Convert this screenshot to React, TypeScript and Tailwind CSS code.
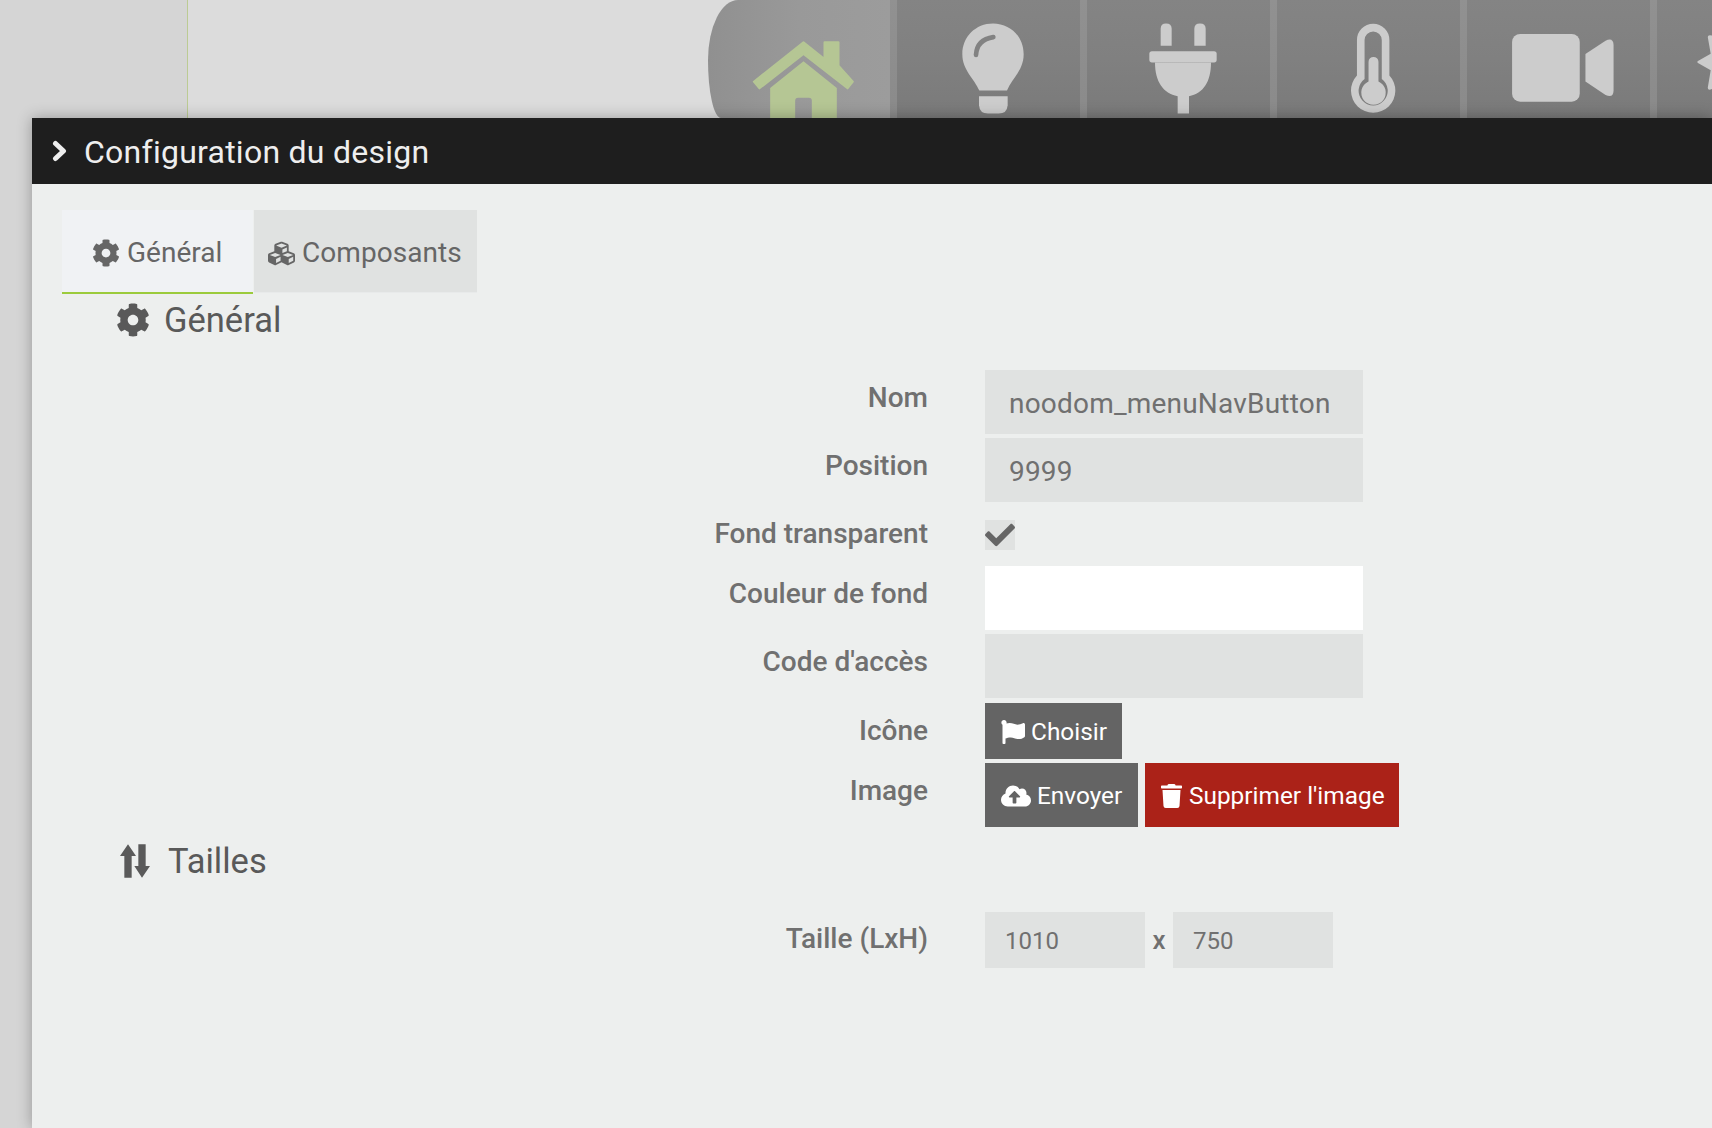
import { FaCheck, FaCloudUploadAlt, FaCog, FaCubes, FaFlag, FaTrash } from 'react-icons/fa';

function HomeIcon() {
  return (
    <svg width="107" height="82" viewBox="180 110 320 246" fill="#b5c694">
      <path
        d="M340 120 L403 170 L403 120 L445 120 L445 190 L488 238 L472 258 L340 155 L208 258 L191 238 Z"
        stroke="#b5c694"
        strokeWidth="6"
        strokeLinejoin="round"
      />
      <path d="M340 177 L440 257 L440 352 L365 352 L365 295 Q365 286 356 286 L324 286 Q315 286 315 295 L315 352 L240 352 L240 257 Z" />
    </svg>
  );
}

function BulbIcon() {
  return (
    <svg width="62" height="91" viewBox="815 69 186 272" fill="#cccccc">
      <path d="M908 70 C960 70 1000 110 1000 162 C1000 210 965 235 950 271 L867 271 C852 235 816 210 816 162 C816 110 856 70 908 70 Z" />
      <path d="M866 288 L952 288 L952 315 Q950 340 925 340 L893 340 Q868 340 866 315 Z" />
      <path d="M857 164 Q860 118 909 111" fill="none" stroke="#828282" strokeWidth="14" strokeLinecap="round" />
    </svg>
  );
}

function PlugIcon() {
  return (
    <svg width="68" height="91" viewBox="117 69 204 272" fill="#cccccc">
      <path d="M152 137 L152 86 Q152 70 168 70 Q185 70 185 86 L185 137 Z" />
      <path d="M253 137 L253 86 Q253 70 270 70 Q287 70 287 86 L287 137 Z" />
      <rect x="118" y="153" width="202" height="34" rx="8" />
      <path d="M135 187 L303 187 C303 245 280 280 237 288 L237 340 L203 340 L203 288 C160 280 135 245 135 187 Z" />
    </svg>
  );
}

function ThermometerIcon() {
  return (
    <svg width="45" height="91" viewBox="722 69 136 272">
      <path
        fillRule="evenodd"
        fill="#cccccc"
        d="M740 119 A49 49 0 0 1 838 119 L838 226 A67 67 0 1 1 740 226 Z M763 119 L763 237 A44 44 0 1 0 815 237 L815 119 A26 26 0 0 0 763 119 Z"
      />
      <path fill="#cccccc" d="M775 185 A15 15 0 0 1 805 185 L805 244 A37 37 0 1 1 775 244 Z" />
    </svg>
  );
}

function CameraIcon() {
  return (
    <svg width="102" height="68" viewBox="218 103 304 203" fill="#cccccc">
      <rect x="218" y="103" width="202" height="202" rx="24" />
      <path d="M437 163 L497 123 Q520 112 521 136 L521 272 Q520 296 497 285 L437 245 Z" />
    </svg>
  );
}

function StarIcon() {
  return (
    <svg width="15" height="57" viewBox="770 103 46 171" fill="#cccccc">
      <path d="M803 110 Q803 103 816 106 L816 270 Q803 275 803 266 L812 212 L773 190 Q769 187 773 184 L812 162 Z" />
    </svg>
  );
}

function SortIcon() {
  return (
    <svg width="30" height="34" viewBox="360 65 90 100" fill="#5a5a5a">
      <path d="M384 65 L408 100 L395 100 L395 165 L373 165 L373 100 L360 100 Z" />
      <path d="M415 65 L437 65 L437 130 L450 130 L426 165 L403 130 L415 130 Z" />
    </svg>
  );
}

function ChevronIcon() {
  return (
    <svg width="16" height="22" viewBox="0 0 16 22" fill="none" stroke="#eeeeee" strokeWidth="5" strokeLinecap="round" strokeLinejoin="round">
      <path d="M3.5 3.5 L11.5 11 L3.5 18.5" />
    </svg>
  );
}

const navItems = [
  { icon: <BulbIcon />, top: 'pt-[23px]' },
  { icon: <PlugIcon />, top: 'pt-[23px]' },
  { icon: <ThermometerIcon />, top: 'pt-[23px]' },
  { icon: <CameraIcon />, top: 'pt-[34px]' },
];

function FieldLabel({ children }: { children: React.ReactNode }) {
  return (
    <label className="w-[896px] shrink-0 pt-2 text-right text-[28px] leading-[40px] font-medium text-[#707070]">
      {children}
    </label>
  );
}

function TextField({ value }: { value?: string }) {
  return (
    <input
      readOnly
      value={value ?? ''}
      className="h-16 w-[378px] bg-[#e0e2e1] pt-0.5 pl-6 text-[28px] tracking-[0.2px] text-[#707070] outline-none"
    />
  );
}

export default function App() {
  return (
    <div className="flex h-[1128px] w-[1712px] flex-col overflow-hidden bg-[#d5d5d5] font-['Roboto',sans-serif]">
      {/* Top nav, dimmed behind the modal */}
      <div className="flex h-[118px] shrink-0">
        <div className="h-full w-[188px] shrink-0 border-r border-[#bccb94]" />
        <div className="flex h-full flex-1 justify-end bg-[#dcdcdc]">
          <div className="flex h-full w-[1004px] shrink-0 overflow-hidden">
            <div className="flex w-[182px] shrink-0 justify-center rounded-[30px_0_0_13px/60px_0_0_58px] bg-gradient-to-r from-[#909090] via-[#999999] to-[#9c9c9c] pt-[39px] pl-2">
              <HomeIcon />
            </div>
            {navItems.map((item, i) => (
              <div key={i} className="flex shrink-0">
                <div className="w-[7px] bg-gradient-to-b from-[#919191] to-[#8a8a8a]" />
                <div className={`flex w-[183px] justify-center bg-gradient-to-b from-[#848484] via-[#808080] to-[#7a7a7a] pl-[9px] ${item.top}`}>
                  {item.icon}
                </div>
              </div>
            ))}
            <div className="w-[7px] shrink-0 bg-gradient-to-b from-[#919191] to-[#8a8a8a]" />
            <div className="flex flex-1 justify-start bg-gradient-to-b from-[#848484] via-[#808080] to-[#7a7a7a] pt-[34px] pl-10">
              <StarIcon />
            </div>
          </div>
        </div>
      </div>

      {/* Design configuration modal */}
      <div className="ml-8 flex-1 bg-[#edefee] shadow-[0_0_14px_rgba(0,0,0,0.3)]">
        <div className="flex h-[66px] items-center bg-[#1e1e1e] pl-[20px] text-[#eeeeee]">
          <ChevronIcon />
          <span className="ml-4 pt-0.5 text-[32px] leading-none tracking-[0.25px]">Configuration du design</span>
        </div>

        <div className="flex pt-[26px] pl-[30px] text-[28px] text-[#666666]">
          <div className="flex h-[84px] w-[191px] items-center border-b-2 border-[#9ccb3c] bg-[#f0f2f4] pt-1 pl-[30px]">
            <FaCog className="mr-[7px] h-[28px] w-[28px]" />
            Général
          </div>
          <div className="ml-px flex h-[83px] w-[223px] items-center border-b border-[#e8eaea] bg-[#e0e2e1] pt-1 pl-[13px] tracking-[0.05px]">
            <FaCubes className="mr-[6px] h-[27px] w-[29px]" />
            Composants
          </div>
        </div>

        <div className="flex items-center pt-1 pl-[84px] text-[34.5px] leading-[44px] text-[#595959]">
          <FaCog className="h-[34px] w-[34px]" />
          <span className="ml-[14px]">Général</span>
        </div>

        <div className="mt-[28px] flex">
          <FieldLabel>Nom</FieldLabel>
          <div className="ml-[57px]"><TextField value="noodom_menuNavButton" /></div>
        </div>
        <div className="mt-1 flex">
          <FieldLabel>Position</FieldLabel>
          <div className="ml-[57px]"><TextField value="9999" /></div>
        </div>
        <div className="mt-1 flex h-[44px]">
          <FieldLabel>Fond transparent</FieldLabel>
          <div className="mt-[14px] ml-[57px] flex h-[30px] w-[30px] items-center justify-start bg-[#e0e2e1]">
            <FaCheck className="h-[30px] w-[30px] text-[#666666]" />
          </div>
        </div>
        <div className="mt-4 flex">
          <FieldLabel>Couleur de fond</FieldLabel>
          <div className="ml-[57px] h-16 w-[378px] bg-white" />
        </div>
        <div className="mt-1 flex">
          <FieldLabel>Code d'accès</FieldLabel>
          <div className="ml-[57px]"><TextField /></div>
        </div>
        <div className="mt-[5px] flex">
          <FieldLabel>Icône</FieldLabel>
          <button className="ml-[57px] flex h-14 w-[137px] items-center bg-[#646464] pt-0.5 pl-4 text-[24.4px] text-white">
            <FaFlag className="mr-[6px] h-[24px] w-[24px]" />
            Choisir
          </button>
        </div>
        <div className="mt-1 flex">
          <FieldLabel>Image</FieldLabel>
          <div className="ml-[57px] flex gap-[7px]">
            <button className="flex h-16 w-[153px] items-center bg-[#646464] pt-0.5 pl-4 text-[24.4px] text-white">
              <FaCloudUploadAlt className="mr-[6px] h-[30px] w-[30px]" />
              Envoyer
            </button>
            <button className="flex h-16 w-[254px] items-center bg-[#ab2218] pt-0.5 pl-4 text-[24.4px] text-white">
              <FaTrash className="mr-[7px] h-[24px] w-[21px]" />
              Supprimer l'image
            </button>
          </div>
        </div>

        <div className="mt-3 flex items-center pl-[88px] text-[34.5px] leading-[44px] text-[#595959]">
          <SortIcon />
          <span className="ml-[18px]">Tailles</span>
        </div>

        <div className="mt-[29px] flex">
          <div className="-mt-px flex shrink-0"><FieldLabel>Taille (LxH)</FieldLabel></div>
          <div className="ml-[57px] flex items-center">
            <input readOnly value="1010" className="h-14 w-40 bg-[#e0e2e1] pt-0.5 pl-5 text-[24px] text-[#707070] outline-none" />
            <span className="w-7 text-center text-[26px] font-medium text-[#707070]">x</span>
            <input readOnly value="750" className="h-14 w-40 bg-[#e0e2e1] pt-0.5 pl-5 text-[24px] text-[#707070] outline-none" />
          </div>
        </div>
      </div>
    </div>
  );
}
